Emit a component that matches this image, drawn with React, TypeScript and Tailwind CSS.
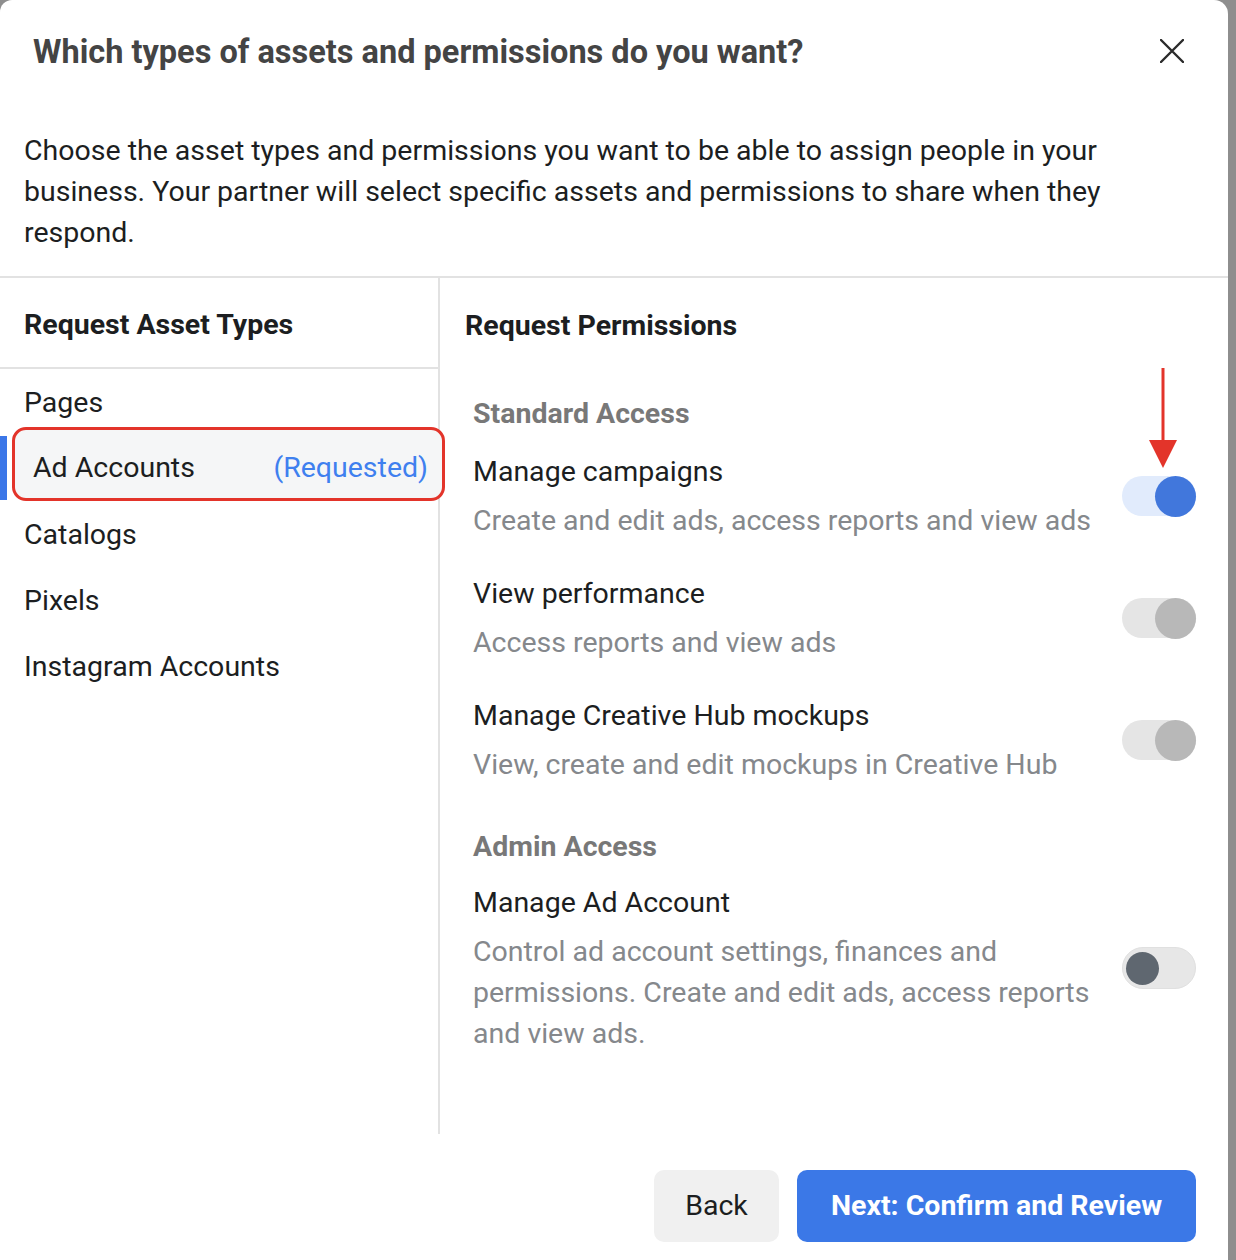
import React from "react";

const font = { fontFamily: "Roboto, 'Noto Sans', Arial, sans-serif" };

const assetTypes = ["Pages", "Ad Accounts", "Catalogs", "Pixels", "Instagram Accounts"];

type Perm = {
  title: string;
  desc: string;
  state: "on" | "disabled" | "off";
};

const standard: Perm[] = [
  { title: "Manage campaigns", desc: "Create and edit ads, access reports and view ads", state: "on" },
  { title: "View performance", desc: "Access reports and view ads", state: "disabled" },
  {
    title: "Manage Creative Hub mockups",
    desc: "View, create and edit mockups in Creative Hub",
    state: "disabled",
  },
];

const admin: Perm[] = [
  {
    title: "Manage Ad Account",
    desc: "Control ad account settings, finances and permissions. Create and edit ads, access reports and view ads.",
    state: "off",
  },
];

function Toggle({ state }: { state: Perm["state"] }) {
  if (state === "on") {
    return (
      <div className="flex h-[40px] w-[74px] shrink-0 items-center justify-end rounded-full bg-[#e1ebfc]">
        <div className="h-[41px] w-[41px] rounded-full bg-[#4177dc]" />
      </div>
    );
  }
  if (state === "disabled") {
    return (
      <div className="flex h-[40px] w-[74px] shrink-0 items-center justify-end rounded-full bg-[#e5e5e5]">
        <div className="h-[41px] w-[41px] rounded-full bg-[#b8b8b8]" />
      </div>
    );
  }
  return (
    <div className="flex h-[42px] w-[74px] shrink-0 items-center justify-start rounded-full border border-[#e0e0e0] bg-[#e7e7e7] pl-[3px]">
      <div className="h-[33px] w-[33px] rounded-full bg-[#5f6770]" />
    </div>
  );
}

function PermRow({ p, first }: { p: Perm; first?: boolean }) {
  return (
    <div className={`flex items-center gap-[20px] ${first ? "" : "mt-[32px]"}`}>
      <div className="flex-1">
        <div className="text-[28.5px] leading-[41px] text-[#1c1e21]">{p.title}</div>
        <div className="mt-[8px] text-[28.5px] leading-[41px] text-[#85888c]">{p.desc}</div>
      </div>
      <Toggle state={p.state} />
    </div>
  );
}

export default function App() {
  return (
    <div className="relative flex h-[1260px] w-[1236px] bg-[#8e8e8e]" style={font}>
      <div className="flex h-[1260px] w-[1228px] flex-col rounded-tl-[12px] rounded-tr-[14px] bg-white">
        {/* header */}
        <div className="flex items-start justify-between pl-[33px] pr-[44px] pt-[35px]">
          <h1 className="text-[32.5px] font-bold leading-[34px] text-[#444444]">
            Which types of assets and permissions do you want?
          </h1>
          <svg width="24" height="24" viewBox="0 0 24 24" className="mt-[4px]">
            <path d="M1 1 L23 23 M23 1 L1 23" stroke="#2b2b2b" strokeWidth="2.4" strokeLinecap="round" />
          </svg>
        </div>
        <p className="mt-[61px] px-[24px] text-[28.5px] leading-[41px] text-[#1c1e21]">
          Choose the asset types and permissions you want to be able to assign people in your
          business. Your partner will select specific assets and permissions to share when they
          respond.
        </p>

        <div className="mt-[23px] flex h-[858px] border-t-2 border-[#e2e2e2]">
          {/* left column */}
          <div className="w-[440px] shrink-0 border-r-2 border-[#e2e2e2]">
            <div className="flex h-[91px] items-center border-b-2 border-[#e2e2e2] pl-[24px] pt-[5px] text-[28.5px] font-bold text-[#1c1e21]">
              Request Asset Types
            </div>
            {assetTypes.map((a) =>
              a === "Ad Accounts" ? (
                <div key={a} className="relative h-[66px]">
                  <div className="absolute left-0 top-[1px] h-[64px] w-[7px] bg-[#3b77e8]" />
                  <div className="absolute left-[12px] top-[-8px] z-10 flex h-[74px] w-[433px] items-center justify-between rounded-[14px] border-[3px] border-[#e3342a] bg-[#f5f6f7] pl-[18px] pr-[14px] pt-[9px] text-[28.5px]">
                    <span className="text-[#1c1e21]">Ad Accounts</span>
                    <span className="text-[#3f80ef]">(Requested)</span>
                  </div>
                </div>
              ) : (
                <div key={a} className="flex h-[66px] items-center pl-[24px] pt-[3px] text-[28.5px] text-[#1c1e21]">
                  {a}
                </div>
              )
            )}
          </div>

          {/* right column */}
          <div className="flex-1 pr-[32px]">
            <div className="flex h-[91px] items-center pl-[25px] pt-[5px] text-[28.5px] font-bold text-[#1c1e21]">
              Request Permissions
            </div>
            <div className="pl-[33px] pt-[24px]">
              <div className="text-[28.5px] font-bold leading-[41px] text-[#787878]">Standard Access</div>
              <div className="mt-[17px]">
                {standard.map((p, i) => (
                  <PermRow key={p.title} p={p} first={i === 0} />
                ))}
              </div>
              <div className="mt-[41px] text-[28.5px] font-bold leading-[41px] text-[#787878]">Admin Access</div>
              <div className="mt-[15px]">
                {admin.map((p, i) => (
                  <PermRow key={p.title} p={p} first={i === 0} />
                ))}
              </div>
            </div>
          </div>
        </div>

        {/* footer */}
        <div className="flex justify-end gap-[18px] pr-[32px] pt-[36px]">
          <button className="h-[72px] w-[125px] rounded-[10px] bg-[#f0f0f0] text-[28.5px] text-[#1c1e21]">
            Back
          </button>
          <button className="h-[72px] w-[399px] rounded-[10px] bg-[#3b78e7] text-[28.5px] font-bold text-white">
            Next: Confirm and Review
          </button>
        </div>
      </div>

      {/* annotation arrow */}
      <svg className="absolute left-[1146px] top-[368px]" width="34" height="102" viewBox="0 0 34 102">
        <path d="M17 0 V76" stroke="#e3342a" strokeWidth="3" />
        <path d="M3 72 L31 72 L17 100 Z" fill="#e3342a" />
      </svg>
    </div>
  );
}
